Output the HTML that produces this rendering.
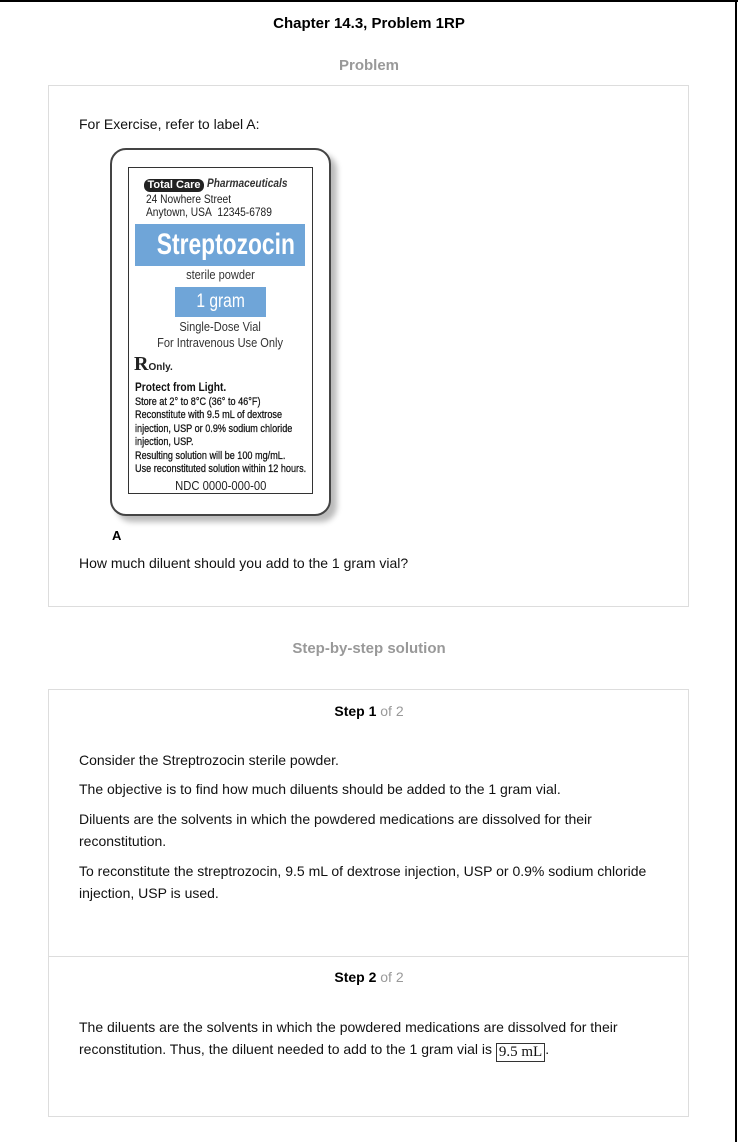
<!DOCTYPE html>
<html><head><meta charset="utf-8"><style>
*{margin:0;padding:0;box-sizing:border-box}
body{width:738px;height:1142px;background:#fff;font-family:"Liberation Sans",Arial,sans-serif;position:relative;overflow:hidden;color:#000}
.abs{position:absolute}
.box{position:absolute;border:1px solid #ddd;background:#fff}
.t{position:absolute;font-size:14px;line-height:22px;color:#111;white-space:nowrap}
.lab{position:absolute;font-family:"Liberation Sans",Arial,sans-serif;color:#222;white-space:nowrap;transform:scaleX(0.85);transform-origin:left top}
</style></head><body>
<div class="abs" style="left:0;top:0;width:738px;height:2px;background:#000"></div>
<div class="abs" style="left:735px;top:0;width:2px;height:1142px;background:#000"></div>

<div class="abs" style="left:0;width:738px;top:15px;text-align:center;font-weight:bold;font-size:15px">Chapter 14.3, Problem 1RP</div>
<div class="abs" style="left:0;width:738px;top:57px;text-align:center;font-weight:bold;font-size:15px;color:#999">Problem</div>

<div class="box" style="left:48px;top:85px;width:641px;height:522px"></div>
<div class="t" style="left:79px;top:113px">For Exercise, refer to label A:</div>

<!-- label -->
<div class="abs" style="left:110px;top:148px;width:221px;height:368px;border:2px solid #444;border-radius:16px;background:#fff;box-shadow:6px 6px 6px #bbb"></div>
<div class="abs" style="left:128px;top:167px;width:185px;height:327px;border:1px solid #333"></div>
<div class="abs" style="left:144px;top:179px;width:60px;height:13px;background:#222;border-radius:6px;color:#fff;font-size:11px;font-weight:bold;line-height:13px;text-align:center">Total Care</div>
<div class="abs" style="left:207px;top:178px;font-size:11.5px;font-weight:bold;font-style:italic;color:#333;transform:scaleX(0.88);transform-origin:left top;white-space:nowrap">Pharmaceuticals</div>
<div class="lab" style="left:146px;top:193px;font-size:12px;line-height:13px">24 Nowhere Street<br>Anytown, USA&nbsp; 12345-6789</div>
<div class="abs" style="left:135px;top:224px;width:170px;height:42px;background:#6fa5d8"></div>
<div class="abs" style="left:135px;top:225px;width:170px;text-align:center;color:#fff;font-weight:bold;font-size:30px;line-height:40px"><span style="display:inline-block;transform:scaleX(0.76)">Streptozocin</span></div>
<div class="abs" style="left:128px;width:185px;top:267px;text-align:center;font-size:13px;color:#333"><span style="display:inline-block;transform:scaleX(0.85)">sterile powder</span></div>
<div class="abs" style="left:175px;top:287px;width:91px;height:30px;background:#6fa5d8;color:#fff;text-align:center;font-size:19px;line-height:29px"><span style="display:inline-block;transform:scaleX(0.82)">1 gram</span></div>
<div class="abs" style="left:128px;width:185px;top:319px;text-align:center;font-size:13px;line-height:16px;color:#333"><span style="display:inline-block;transform:scaleX(0.85)">Single-Dose Vial<br>For Intravenous Use Only</span></div>
<div class="abs" style="left:134px;top:353px;font-family:'Liberation Serif',serif;font-size:20px;font-weight:bold;color:#222">R<span style="font-family:'Liberation Sans';font-size:10px">Only.</span></div>
<div class="lab" style="left:135px;top:381px;font-size:12px;font-weight:bold;line-height:13px;color:#111">Protect from Light.</div>
<div class="lab" style="left:135px;top:396px;font-size:10.6px;line-height:13.4px;transform:scaleX(0.86);color:#111;-webkit-text-stroke:0.25px #111">Store at 2° to 8°C (36° to 46°F)<br>Reconstitute with 9.5 mL of dextrose<br>injection, USP or 0.9% sodium chloride<br>injection, USP.<br>Resulting solution will be 100 mg/mL.<br>Use reconstituted solution within 12 hours.</div>
<div class="abs" style="left:128px;width:185px;top:479px;text-align:center;font-size:12.5px;color:#222"><span style="display:inline-block;transform:scaleX(0.9)">NDC 0000-000-00</span></div>
<div class="abs" style="left:112px;top:528px;font-size:13px;font-weight:bold">A</div>

<div class="t" style="left:79px;top:552px">How much diluent should you add to the 1 gram vial?</div>

<div class="abs" style="left:0;width:738px;top:640px;text-align:center;font-weight:bold;font-size:15px;color:#999">Step-by-step solution</div>

<div class="box" style="left:48px;top:689px;width:641px;height:428px"></div>
<div class="abs" style="left:49px;top:956px;width:639px;height:1px;background:#ddd"></div>

<div class="abs" style="left:0;width:738px;top:703px;text-align:center;font-size:14px"><b>Step 1</b> <span style="color:#999">of 2</span></div>
<div class="t" style="left:79px;top:749px">Consider the Streptrozocin sterile powder.</div>
<div class="t" style="left:79px;top:778px">The objective is to find how much diluents should be added to the 1 gram vial.</div>
<div class="t" style="left:79px;top:808px">Diluents are the solvents in which the powdered medications are dissolved for their<br>reconstitution.</div>
<div class="t" style="left:79px;top:860px">To reconstitute the streptrozocin, 9.5 mL of dextrose injection, USP or 0.9% sodium chloride<br>injection, USP is used.</div>

<div class="abs" style="left:0;width:738px;top:969px;text-align:center;font-size:14px"><b>Step 2</b> <span style="color:#999">of 2</span></div>
<div class="t" style="left:79px;top:1016px">The diluents are the solvents in which the powdered medications are dissolved for their<br>reconstitution. Thus, the diluent needed to add to the 1 gram vial is <span style="display:inline-block;border:1px solid #333;font-family:'Liberation Serif',serif;font-size:15px;line-height:17px;padding:0 2px;vertical-align:-2px">9.5 mL</span>.</div>
</body></html>
